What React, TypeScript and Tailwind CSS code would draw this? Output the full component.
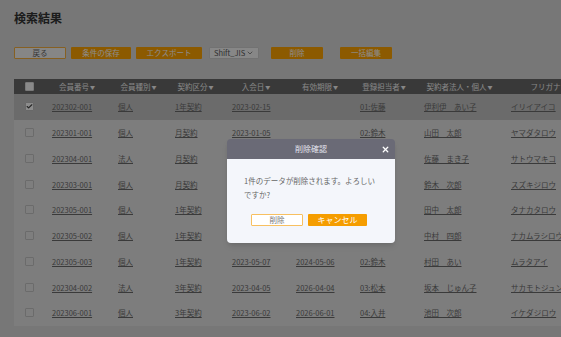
import { X, ChevronDown, Check } from 'lucide-react';

const rows = [
  { no: '202302-001', kind: '個人', plan: '1年契約', join: '2023-02-15', end: '', staff: '01:佐藤', name: '伊利伊　あい子', kana: 'イリイアイコ', checked: true },
  { no: '202301-001', kind: '個人', plan: '月契約', join: '2023-01-05', end: '', staff: '02:鈴木', name: '山田　太郎', kana: 'ヤマダタロウ' },
  { no: '202304-001', kind: '法人', plan: '月契約', join: '2023-04-10', end: '', staff: '03:松本', name: '佐藤　まき子', kana: 'サトウマキコ' },
  { no: '202303-001', kind: '個人', plan: '月契約', join: '2023-03-01', end: '', staff: '01:佐藤', name: '鈴木　次郎', kana: 'スズキジロウ' },
  { no: '202305-001', kind: '個人', plan: '1年契約', join: '2023-05-01', end: '2024-04-30', staff: '04:入井', name: '田中　太郎', kana: 'タナカタロウ' },
  { no: '202305-002', kind: '個人', plan: '1年契約', join: '2023-05-03', end: '2024-05-02', staff: '02:鈴木', name: '中村　四郎', kana: 'ナカムラシロウ' },
  { no: '202305-003', kind: '個人', plan: '1年契約', join: '2023-05-07', end: '2024-05-06', staff: '02:鈴木', name: '村田　あい', kana: 'ムラタアイ' },
  { no: '202304-002', kind: '法人', plan: '3年契約', join: '2023-04-05', end: '2026-04-04', staff: '03:松本', name: '坂本　じゅん子', kana: 'サカモトジュンコ' },
  { no: '202306-001', kind: '個人', plan: '3年契約', join: '2023-06-02', end: '2026-06-01', staff: '04:入井', name: '池田　次郎', kana: 'イケダジロウ' },
];

const headers = ['会員番号', '会員種別', '契約区分', '入会日', '有効期限', '登録担当者', '契約者法人・個人', 'フリガナ'];

function Box({ checked }: { checked?: boolean }) {
  return (
    <span className={`mx-auto flex h-[9px] w-[9px] items-center justify-center rounded-[1px] border ${checked ? 'border-[#bdbdbd] bg-white' : 'border-[#c4c4c4] bg-[#e6e6e6]'}`}>
      {checked && <Check size={7} strokeWidth={4} className="text-[#444]" />}
    </span>
  );
}

export default function App() {
  return (
    <div className="relative h-[337px] w-[561px] overflow-hidden bg-[#d9d9d9] font-['Noto_Sans_CJK_JP',sans-serif]">
      <div className="px-[14px] pt-[9px]">
        <h1 className="text-[12px] font-bold leading-[18px] text-[#333]">検索結果</h1>

        <div className="mt-[20px] flex h-[12px] items-stretch text-[7.5px] leading-none">
          <button className="w-[52px] rounded-[1px] border border-[#f5b040] bg-[#f4f4f4] text-[#666]">戻る</button>
          <button className="ml-[5px] w-[60px] rounded-[1px] bg-[#ffa400] text-white">条件の保存</button>
          <button className="ml-[5px] w-[66px] rounded-[1px] bg-[#ffa400] text-white">エクスポート</button>
          <div className="ml-[7px] flex w-[50px] items-center justify-between rounded-[1px] border border-[#d0d0d0] bg-[#f6f6f6] px-[4px] text-[#555]">
            <span>Shift_JIS</span>
            <ChevronDown size={8} strokeWidth={2} />
          </div>
          <button className="ml-[12px] w-[52px] rounded-[1px] bg-[#ffa400] text-white">削除</button>
          <button className="ml-[17px] w-[52px] rounded-[1px] bg-[#ffa400] text-white">一括編集</button>
        </div>

        <table className="mt-[20px] w-[580px] table-fixed border-collapse bg-[#e4e4e4] text-[7.5px] text-[#6b6b6b]">
          <colgroup>
            <col className="w-[30px]" />
            <col className="w-[66px]" />
            <col className="w-[57px]" />
            <col className="w-[57px]" />
            <col className="w-[64px]" />
            <col className="w-[64px]" />
            <col className="w-[64px]" />
            <col className="w-[87px]" />
            <col className="w-[91px]" />
          </colgroup>
          <thead>
            <tr className="h-[15px] bg-[#686868] text-[#f4f4f4]">
              <th className="p-0">
                <span className="mx-auto block h-[9px] w-[9px] rounded-[1px] border border-[#ddd] bg-[#fafafa]" />
              </th>
              {headers.map(h => (
                <th key={h} className="p-0 text-center font-normal whitespace-nowrap">
                  {h}<span className="ml-[1px] align-[1px] text-[5px]">▼</span>
                </th>
              ))}
            </tr>
          </thead>
          <tbody>
            {rows.map(r => (
              <tr key={r.no} className={`h-[25.75px] ${r.checked ? 'bg-[#c3c3c3]' : ''}`}>
                <td className="p-0"><Box checked={r.checked} /></td>
                {[r.no, r.kind, r.plan, r.join, r.end, r.staff, r.name, r.kana].map((v, i) => (
                  <td key={i} className="overflow-hidden whitespace-nowrap p-0 pl-[8px]">
                    <span className="underline">{v}</span>
                  </td>
                ))}
              </tr>
            ))}
          </tbody>
        </table>
      </div>

      <div className="absolute inset-0 bg-black/45" />

      <div className="absolute left-[227px] top-[139px] w-[168px] overflow-hidden rounded-[4px] shadow-md">
        <div className="relative flex h-[20px] items-center justify-center bg-[#6a6a76] text-[8px] text-[#e4e4ee]">
          削除確認
          <X size={9} strokeWidth={3.5} className="absolute right-[5px] top-[5.5px] text-white" />
        </div>
        <div className="bg-[#f4f6fb] px-[17px] pt-[15px] pb-[17px]">
          <p className="w-[136px] text-[7.5px] leading-[14px] text-[#666]">1件のデータが削除されます。よろしいですか?</p>
          <div className="ml-[7px] mt-[12px] flex h-[12px] text-[7.5px] leading-none">
            <button className="w-[52px] rounded-[1px] border border-[#f8c060] bg-white text-[#777]">削除</button>
            <button className="ml-[5px] w-[59px] rounded-[1px] bg-[#f59d00] text-[8px] text-white">キャンセル</button>
          </div>
        </div>
      </div>
    </div>
  );
}
